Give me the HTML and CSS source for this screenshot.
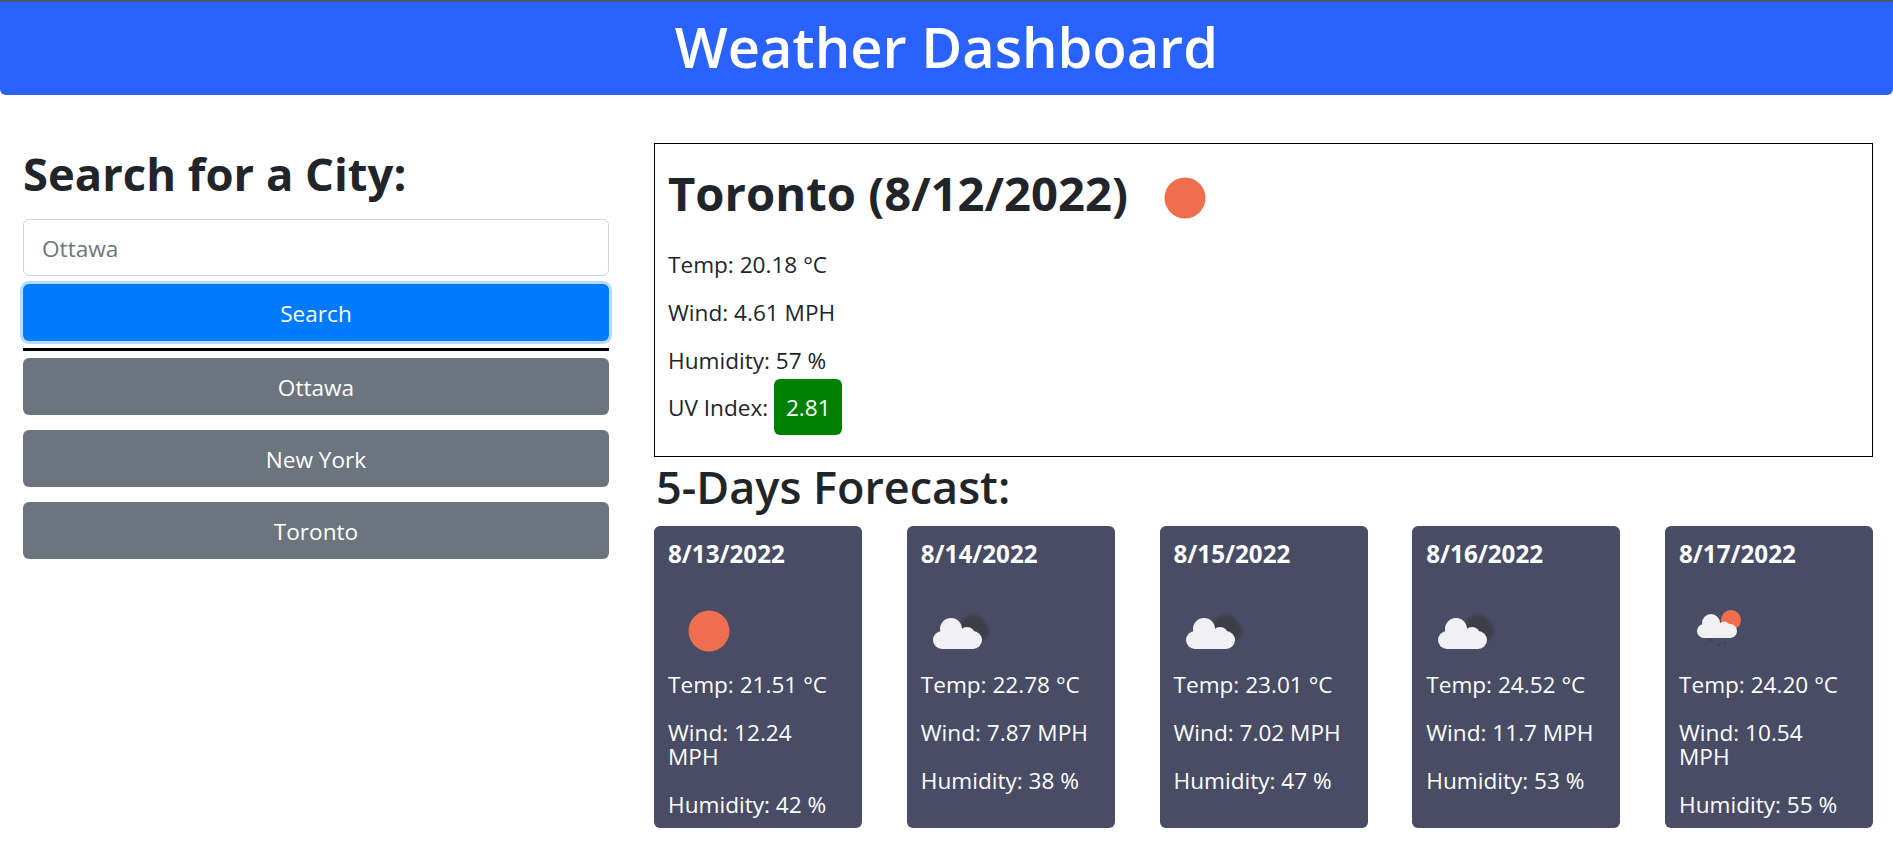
FILE: index.html
```html
<!DOCTYPE html>
<html lang="en">
<head>
    <meta charset="UTF-8">
    <meta name="viewport" content="width=device-width, initial-scale=1.0">
    <title>Weather Dashboard</title>
    <link rel="stylesheet" href="styles.css">
</head>
<body>
    <header class="page-header">
        <h1>Weather Dashboard</h1>
    </header>

    <div class="layout">
        <aside class="search-panel">
            <h2 class="search-title">Search for a City:</h2>
            <input class="city-input" type="text" placeholder="Ottawa">
            <button class="btn btn-search">Search</button>
            <div class="divider"></div>
            <button class="btn btn-city">Ottawa</button>
            <button class="btn btn-city">New York</button>
            <button class="btn btn-city">Toronto</button>
        </aside>

        <main class="results">
            <section class="current">
                <div class="current-head">
                    <h2 class="current-title">Toronto (8/12/2022)</h2>
                    <svg class="icon current-icon" viewBox="0 0 82 82"><circle cx="41" cy="41" r="20.5" fill="#ee6e4d"/></svg>
                </div>
                <p>Temp: 20.18 °C</p>
                <p>Wind: 4.61 MPH</p>
                <p class="humidity">Humidity: 57 %</p>
                <div class="uv">UV Index: <span class="uv-value">2.81</span></div>
            </section>

            <h2 class="forecast-title">5-Days Forecast:</h2>
            <div class="forecast">
                <div class="card">
                    <h3>8/13/2022</h3>
                    <svg class="icon" viewBox="0 0 82 82"><circle cx="41" cy="41" r="20.5" fill="#ee6e4d"/></svg>
                    <p>Temp: 21.51 °C</p>
                    <p>Wind: 12.24 MPH</p>
                    <p>Humidity: 42 %</p>
                </div>
                <div class="card">
                    <h3>8/14/2022</h3>
                    <svg class="icon" viewBox="0 0 82 82">
                        <g class="cloud-shadow"><circle cx="52" cy="38" r="13"/><circle cx="58" cy="41" r="10"/></g>
                        <g class="cloud"><rect x="12" y="41" width="49" height="18" rx="9"/><circle cx="30" cy="39" r="11"/><circle cx="46" cy="45" r="8"/></g>
                    </svg>
                    <p>Temp: 22.78 °C</p>
                    <p>Wind: 7.87 MPH</p>
                    <p>Humidity: 38 %</p>
                </div>
                <div class="card">
                    <h3>8/15/2022</h3>
                    <svg class="icon" viewBox="0 0 82 82">
                        <g class="cloud-shadow"><circle cx="52" cy="38" r="13"/><circle cx="58" cy="41" r="10"/></g>
                        <g class="cloud"><rect x="12" y="41" width="49" height="18" rx="9"/><circle cx="30" cy="39" r="11"/><circle cx="46" cy="45" r="8"/></g>
                    </svg>
                    <p>Temp: 23.01 °C</p>
                    <p>Wind: 7.02 MPH</p>
                    <p>Humidity: 47 %</p>
                </div>
                <div class="card">
                    <h3>8/16/2022</h3>
                    <svg class="icon" viewBox="0 0 82 82">
                        <g class="cloud-shadow"><circle cx="52" cy="38" r="13"/><circle cx="58" cy="41" r="10"/></g>
                        <g class="cloud"><rect x="12" y="41" width="49" height="18" rx="9"/><circle cx="30" cy="39" r="11"/><circle cx="46" cy="45" r="8"/></g>
                    </svg>
                    <p>Temp: 24.52 °C</p>
                    <p>Wind: 11.7 MPH</p>
                    <p>Humidity: 53 %</p>
                </div>
                <div class="card">
                    <h3>8/17/2022</h3>
                    <svg class="icon" viewBox="0 0 82 82">
                        <circle cx="52" cy="30" r="10" fill="#ee6e4d"/>
                        <g class="cloud"><rect x="18" y="34" width="40" height="14" rx="7"/><circle cx="32" cy="33" r="9"/><circle cx="45" cy="38" r="6.5"/></g>
                        <g class="rain"><circle cx="32" cy="50" r="1.2"/><circle cx="40" cy="55" r="1.2"/><circle cx="46" cy="53" r="1.2"/></g>
                    </svg>
                    <p>Temp: 24.20 °C</p>
                    <p>Wind: 10.54 MPH</p>
                    <p>Humidity: 55 %</p>
                </div>
            </div>
        </main>
    </div>
</body>
</html>
```

FILE: styles.css
```css
body {
    margin: 0;
    font-family: "Open Sans", "Noto Sans", Arial, sans-serif;
    font-size: 22.6px;
    color: #212529;
    background: #fff;
}
h1, h2, h3, p {
    margin: 0;
}
.page-header {
    height: 93px;
    border-top: 2px solid #4a5670;
    background: #2962ff;
    border-radius: 0 0 6px 6px;
    color: #fff;
    text-align: center;
}
.page-header h1 {
    font-size: 56px;
    font-weight: 600;
    line-height: 88px;
}
.layout {
    display: flex;
    padding: 48px 20px 0 23px;
    gap: 45px;
}
.search-panel {
    width: 586px;
    flex-shrink: 0;
    display: flex;
    flex-direction: column;
}
.search-title {
    font-size: 45.4px;
    font-weight: 700;
    line-height: 58px;
    margin-top: 1px;
    margin-bottom: 17px;
}
.city-input {
    height: 57px;
    box-sizing: border-box;
    padding: 2px 18px 0;
    border: 1px solid #ced4da;
    border-radius: 6px;
    font: inherit;
    outline: none;
}
.city-input::placeholder {
    color: #6c757d;
}
.btn {
    height: 57px;
    padding: 2px 0 0;
    border: none;
    border-radius: 6px;
    color: #fff;
    font: inherit;
}
.btn-search {
    margin-top: 8px;
    background: #007bff;
    box-shadow: 0 0 0 3px #b3dcff;
}
.divider {
    height: 3px;
    margin: 7px 0 7px;
    background: #000;
}
.btn-city {
    margin-bottom: 15px;
    background: #6c757d;
}
.results {
    flex: 1;
}
.current {
    height: 314px;
    box-sizing: border-box;
    padding: 20px 13px 0;
    border: 1px solid #000;
}
.current p {
    line-height: 24px;
    margin-bottom: 24px;
}
.current-head {
    display: flex;
    align-items: flex-start;
    gap: 16px;
    margin-bottom: 31px;
}
.current-title {
    font-size: 47.2px;
    font-weight: 700;
    line-height: 58px;
}
.current .humidity {
    margin-bottom: 6px;
}
.uv {
    display: flex;
    align-items: center;
    gap: 6px;
}
.uv-value {
    width: 68px;
    height: 56px;
    display: flex;
    align-items: center;
    justify-content: center;
    border-radius: 6px;
    background: #008000;
    color: #fff;
}
.forecast-title {
    font-size: 45px;
    font-weight: 600;
    line-height: 58px;
    margin: 1px 0 10px 2px;
}
.forecast {
    display: flex;
    justify-content: space-between;
}
.card {
    width: 208px;
    height: 302px;
    box-sizing: border-box;
    padding: 14px 14px 0;
    border-radius: 6px;
    background: #484c65;
    color: #fff;
}
.card h3 {
    font-size: 24.2px;
    font-weight: 700;
    line-height: 28px;
    margin-bottom: 22px;
}
.card p {
    line-height: 24px;
    margin-bottom: 24px;
}
.icon {
    display: block;
    width: 82px;
    height: 82px;
    margin-bottom: 1px;
}
.current-icon {
    margin-top: -7px;
    margin-bottom: -17px;
}
.cloud {
    fill: #f1f1f3;
}
.cloud-shadow {
    fill: #3c3c42;
    opacity: .85;
    filter: blur(1.5px);
}
.rain {
    fill: #3c3c44;
    opacity: .6;
}
```
